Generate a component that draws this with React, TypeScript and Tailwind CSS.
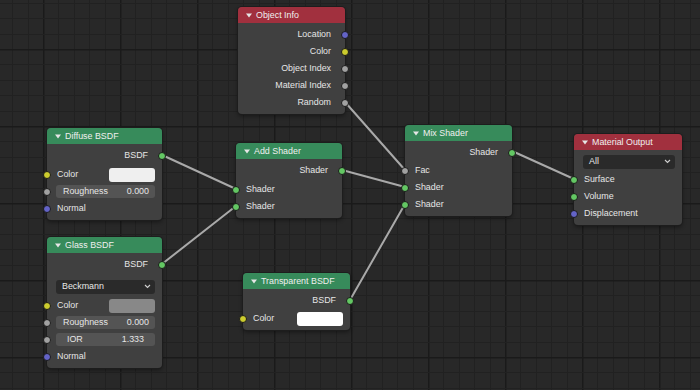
import React from "react";

type SocketColor = "green" | "yellow" | "gray" | "purple";

const socketColors: Record<SocketColor, string> = {
    green: "bg-[#63c763]",
    yellow: "bg-[#cccc2e]",
    gray: "bg-[#a1a1a1]",
    purple: "bg-[#6363c7]",
};

function Socket({ side, color }: { side: "left" | "right"; color: SocketColor }) {
    return (
        <span
            className={`absolute top-1/2 -translate-y-1/2 w-[8px] h-[8px] rounded-full border border-[#1a1a1a] ${side === "left" ? "-left-[4px]" : "-right-[4px]"} ${socketColors[color]}`}
        />
    );
}

function Output({ label, color = "green" }: { label: string; color?: SocketColor }) {
    return (
        <div className="relative h-[17px] flex items-center justify-end pr-[14px]">
            {label}
            <Socket side="right" color={color} />
        </div>
    );
}

function Input({ label, color = "green" }: { label: string; color?: SocketColor }) {
    return (
        <div className="relative h-[17px] flex items-center pl-[10px]">
            {label}
            <Socket side="left" color={color} />
        </div>
    );
}

function ColorInput({ swatch }: { swatch: string }) {
    return (
        <div className="relative h-[17px] flex items-center pl-[10px] pr-[7px]">
            Color
            <span className={`ml-auto w-[46px] h-[14px] rounded-[3px] ${swatch}`} />
            <Socket side="left" color="yellow" />
        </div>
    );
}

function FieldInput({ label, value, wide }: { label: string; value: string; wide?: boolean }) {
    return (
        <div className="relative h-[17px] flex items-center pl-[9px] pr-[7px]">
            <div
                className={`flex-1 h-[13px] rounded-[3px] bg-[#545454] flex items-center justify-between ${wide ? "pl-[11px] pr-[11px]" : "pl-[7px] pr-[6px]"}`}
            >
                <span>{label}</span>
                <span>{value}</span>
            </div>
            <Socket side="left" color="gray" />
        </div>
    );
}

function Dropdown({ label }: { label: string }) {
    return (
        <div className="h-[17px] flex items-center pl-[9px] pr-[7px]">
            <div className="flex-1 h-[14px] rounded-[3px] bg-[#2a2a2a] flex items-center justify-between pl-[6px] pr-[4px]">
                <span>{label}</span>
                <svg width="7" height="5" viewBox="0 0 7 5">
                    <path d="M1 1 L3.5 3.5 L6 1" stroke="#d0d0d0" strokeWidth="1.1" fill="none" />
                </svg>
            </div>
        </div>
    );
}

function Node({
    title,
    red,
    pos,
    children,
}: {
    title: string;
    red?: boolean;
    pos: string;
    children: React.ReactNode;
}) {
    return (
        <div
            className={`absolute ${pos} flex flex-col rounded-[4px] bg-[#404040] shadow-[0_0_0_1px_#1d1d1d,0_2px_4px_rgba(0,0,0,0.45)] text-[#e6e6e6]`}
        >
            <div
                className={`h-[16px] rounded-t-[4px] flex items-center pl-[8px] text-[#efefef] ${red ? "bg-[#a1303e]" : "bg-[#378b5b]"}`}
            >
                <svg width="6" height="5" viewBox="0 0 6 5" className="mr-[4px]">
                    <path d="M0 0.5 H6 L3 4.5 Z" fill="#e6e6e6" />
                </svg>
                {title}
            </div>
            <div className="pt-[3px] pb-[3px]">{children}</div>
        </div>
    );
}

const wires: [number, number, number, number][] = [
    [162, 155, 236, 189],
    [162, 264, 236, 206],
    [342, 170, 405, 187],
    [345, 102, 405, 170],
    [350, 300, 405, 204],
    [512, 151, 574, 179],
];

function Backdrop() {
    const vx: number[] = [];
    for (let x = 12.2; x < 700; x += 15.4) vx.push(x);
    const hy: number[] = [];
    for (let y = 2.8; y < 390; y += 15.4) hy.push(y);
    const isMajor = (v: number, base: number) => Math.abs(((v - base) / 77) - Math.round((v - base) / 77)) < 0.01;

    return (
        <svg className="absolute inset-0" width="700" height="390">
            {vx.map((x) => (
                <rect
                    key={`v${x}`}
                    x={Math.round(x)}
                    y={0}
                    width={isMajor(x, 43) ? 1.5 : 1}
                    height={390}
                    fill={isMajor(x, 43) ? "#1a1a1a" : "#212121"}
                />
            ))}
            {hy.map((y) => (
                <rect
                    key={`h${y}`}
                    x={0}
                    y={Math.round(y)}
                    width={700}
                    height={isMajor(y, 49) ? 1.5 : 1}
                    fill={isMajor(y, 49) ? "#1a1a1a" : "#212121"}
                />
            ))}
            {wires.map(([x1, y1, x2, y2], i) => (
                <line key={i} x1={x1} y1={y1} x2={x2} y2={y2} stroke="#a9a9a9" strokeWidth="2" strokeLinecap="round" />
            ))}
        </svg>
    );
}

export default function App() {
    return (
        <div className="relative w-[700px] h-[390px] overflow-hidden bg-[#282828] font-['Liberation_Sans',Arial,sans-serif] text-[8.9px] leading-none">
            <Backdrop />

            <Node title="Object Info" red pos="left-[238px] top-[7px] w-[107px]">
                <Output label="Location" color="purple" />
                <Output label="Color" color="yellow" />
                <Output label="Object Index" color="gray" />
                <Output label="Material Index" color="gray" />
                <Output label="Random" color="gray" />
            </Node>

            <Node title="Diffuse BSDF" pos="left-[47px] top-[128px] w-[115px]">
                <Output label="BSDF" />
                <div className="mt-[2px]">
                    <ColorInput swatch="bg-[#efefef]" />
                    <FieldInput label="Roughness" value="0.000" />
                    <Input label="Normal" color="purple" />
                </div>
            </Node>

            <Node title="Glass BSDF" pos="left-[47px] top-[237px] w-[115px]">
                <Output label="BSDF" />
                <div className="mt-[5px]">
                    <Dropdown label="Beckmann" />
                </div>
                <div className="mt-[2px]">
                    <ColorInput swatch="bg-[#888888]" />
                    <FieldInput label="Roughness" value="0.000" />
                    <FieldInput label="IOR" value="1.333" wide />
                    <Input label="Normal" color="purple" />
                </div>
            </Node>

            <Node title="Add Shader" pos="left-[236px] top-[143px] w-[106px]">
                <Output label="Shader" />
                <div className="mt-[2px]">
                    <Input label="Shader" />
                    <Input label="Shader" />
                </div>
            </Node>

            <Node title="Mix Shader" pos="left-[405px] top-[125px] w-[107px]">
                <Output label="Shader" />
                <div className="mt-[1px]">
                    <Input label="Fac" color="gray" />
                    <Input label="Shader" />
                    <Input label="Shader" />
                </div>
            </Node>

            <Node title="Material Output" red pos="left-[574px] top-[134px] w-[108px]">
                <Dropdown label="All" />
                <div className="mt-[1px]">
                    <Input label="Surface" />
                    <Input label="Volume" />
                    <Input label="Displacement" color="purple" />
                </div>
            </Node>

            <Node title="Transparent BSDF" pos="left-[243px] top-[273px] w-[107px]">
                <Output label="BSDF" />
                <div className="mt-[1px]">
                    <ColorInput swatch="bg-[#ffffff]" />
                </div>
            </Node>
        </div>
    );
}
